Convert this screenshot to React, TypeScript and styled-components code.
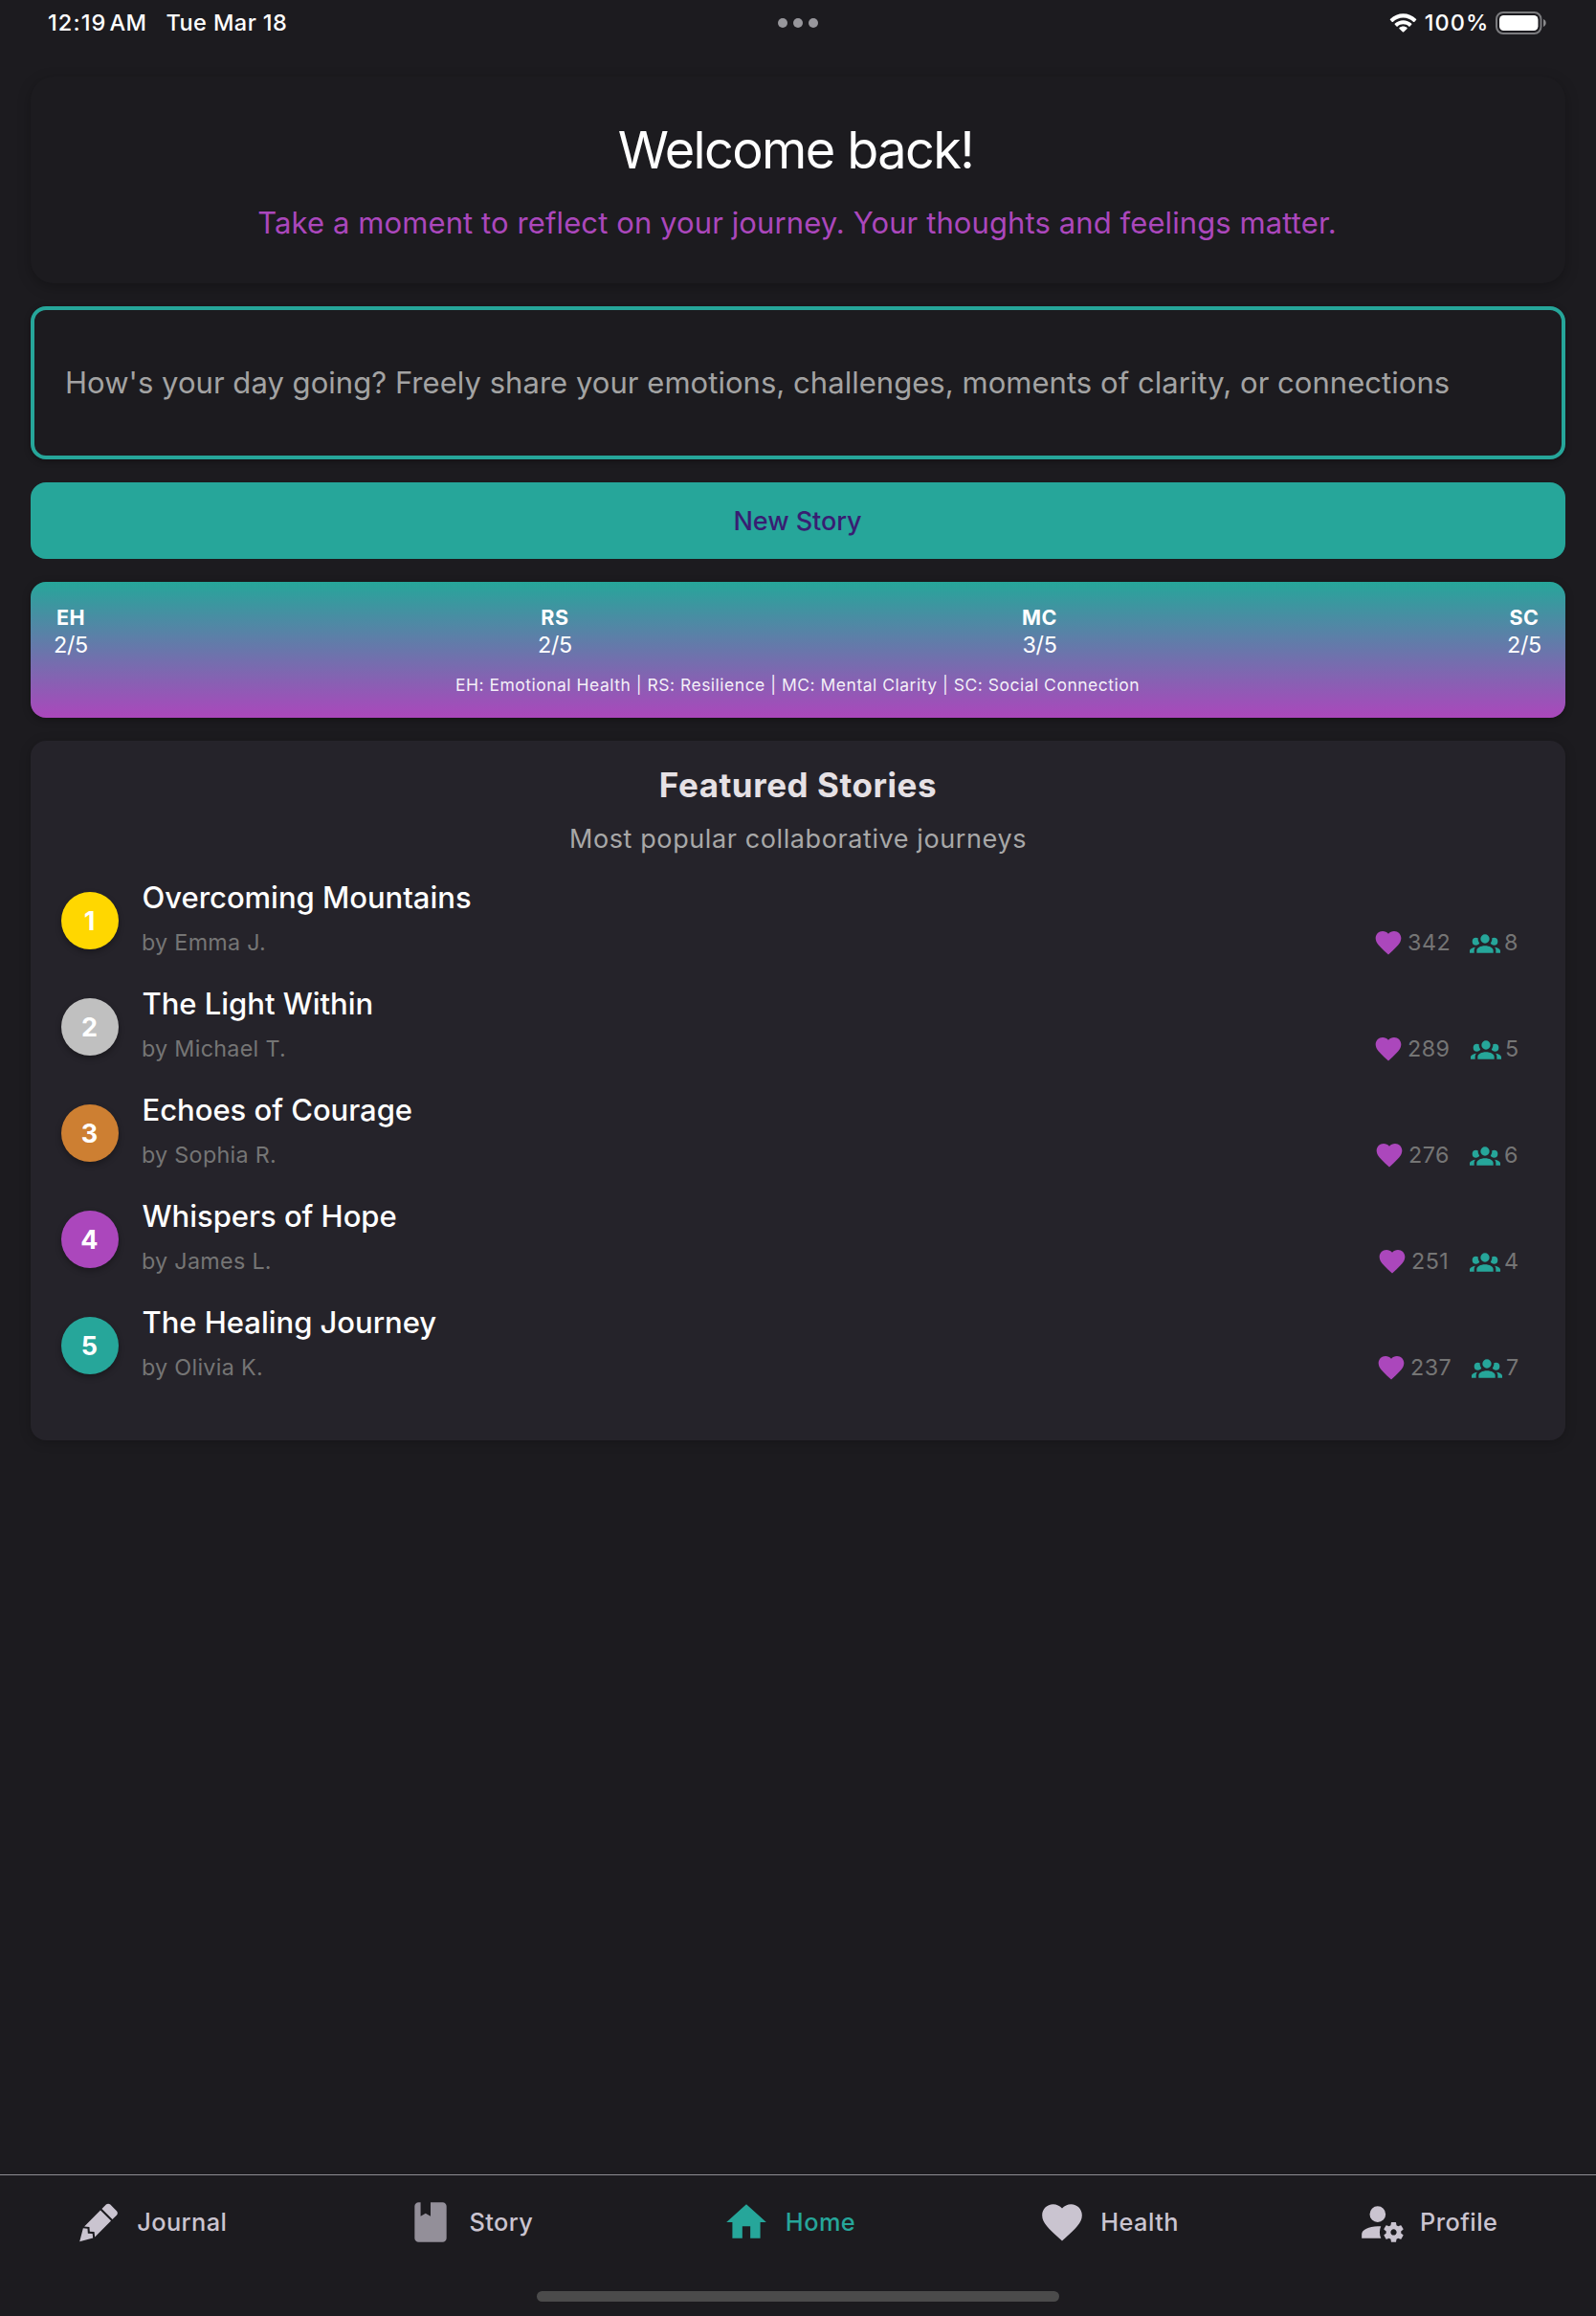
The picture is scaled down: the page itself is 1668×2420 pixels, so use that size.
import React from "react";
import styled, { createGlobalStyle } from "styled-components";

const color = {
  bg: "#1c1b1f",
  surface: "#25232a",
  teal: "#26a69a",
  purple: "#ab47bc",
  nav: "#cac4d0",
};

const GlobalStyle = createGlobalStyle`
  * { box-sizing: border-box; }
  body {
    margin: 0;
    background: ${color.bg};
    font-family: Inter, "Noto Sans", sans-serif;
    -webkit-font-smoothing: antialiased;
  }
  h1, h2, h3, p { margin: 0; font-weight: 400; }
`;

const Screen = styled.div`
  display: flex;
  flex-direction: column;
  width: 1668px;
  height: 2420px;
  background: ${color.bg};
  color: #fff;
  overflow: hidden;
`;

/* ---------- status bar ---------- */

const StatusBar = styled.header`
  display: grid;
  grid-template-columns: 1fr auto 1fr;
  align-items: start;
  height: 48px;
  padding: 0 51px 0 50px;
  flex: none;
  font-size: 23.5px;
  font-weight: 500;
  line-height: 47px;
`;

const StatusLeft = styled.div`
  display: flex;
  white-space: pre;
`;

const Time = styled.span`
  width: 123.5px;
  letter-spacing: 1.1px;
`;

const Meridiem = styled.span`
  margin-left: 3px;
  letter-spacing: 0.4px;
`;

const DateText = styled.span`
  letter-spacing: 0.42px;
`;

const Dots = styled.div`
  display: flex;
  gap: 6px;
  padding: 19px 0 0 1px;
`;

const Dot = styled.i`
  width: 10px;
  height: 10px;
  border-radius: 50%;
  background: #98979c;
`;

const StatusRight = styled.div`
  display: flex;
  justify-content: flex-end;
`;

const WifiIcon = styled.svg`
  width: 29px;
  height: 20.5px;
  margin: 13.5px 7.5px 0 0;
`;

const BatteryLevel = styled.span`
  letter-spacing: 1.1px;
  margin-right: 6.5px;
`;

const BatteryIcon = styled.svg`
  width: 53px;
  height: 24px;
  margin: 12px 1px 0 0;
`;

/* ---------- content ---------- */

const Content = styled.main`
  display: flex;
  flex-direction: column;
  gap: 24px;
  flex: 1;
  padding: 32px 32px 0;
`;

const WelcomeCard = styled.section`
  height: 216px;
  padding-top: 40px;
  border-radius: 24px;
  background: ${color.bg};
  box-shadow: 0 4px 14px rgba(0, 0, 0, 0.26);
  text-align: center;
`;

const WelcomeTitle = styled.h1`
  padding-right: 5px;
  font-size: 54px;
  line-height: 73px;
  letter-spacing: -1.6px;
`;

const WelcomeText = styled.p`
  margin-top: 16px;
  padding-right: 2px;
  font-size: 31px;
  line-height: 47px;
  letter-spacing: 0.1px;
  color: ${color.purple};
`;

const PromptField = styled.div`
  height: 160px;
  padding: 52px 32px 0;
  border: 4px solid ${color.teal};
  border-radius: 16px;
  box-shadow: 0 2px 6px rgba(0, 0, 0, 0.35);
  font-size: 31px;
  line-height: 47px;
  letter-spacing: 0.04px;
  color: #a3a3a3;
  white-space: nowrap;
`;

const StoryButton = styled.button`
  height: 80px;
  padding: 21px 1px 20px 0;
  border: 0;
  border-radius: 16px;
  background: ${color.teal};
  font: 500 27px / 39px Inter, "Noto Sans", sans-serif;
  letter-spacing: -0.05px;
  color: #381e72;
`;

const ScoreCard = styled.section`
  height: 142px;
  padding: 24px;
  border-radius: 16px;
  background: linear-gradient(180deg, ${color.teal}, ${color.purple});
  box-shadow: 0 2px 8px rgba(0, 0, 0, 0.3);
`;

const ScoreRow = styled.div`
  display: flex;
  justify-content: space-between;
  padding-right: 1px;
`;

const Score = styled.div`
  display: flex;
  flex-direction: column;
  align-items: center;
`;

const ScoreLabel = styled.span`
  font-size: 21.5px;
  font-weight: 700;
  line-height: 26px;
  letter-spacing: 0.5px;
`;

const ScoreValue = styled.span`
  font-size: 23.3px;
  line-height: 31px;
  letter-spacing: -0.3px;
`;

const Legend = styled.p`
  margin-top: 16px;
  padding-right: 1px;
  font-size: 17.5px;
  line-height: 21px;
  letter-spacing: 0.5px;
  text-align: center;
  color: rgba(255, 255, 255, 0.92);
`;

const Featured = styled.section`
  height: 731px;
  padding-top: 24px;
  border-radius: 16px;
  background: ${color.surface};
  box-shadow: 0 2px 12px rgba(0, 0, 0, 0.22);
`;

const FeaturedTitle = styled.h2`
  font-size: 35px;
  font-weight: 700;
  line-height: 44px;
  letter-spacing: 0.55px;
  text-align: center;
  color: #e6e1e5;
`;

const FeaturedSubtitle = styled.p`
  margin: 15px 0 11px;
  font-size: 27px;
  line-height: 39px;
  letter-spacing: 0.6px;
  text-align: center;
  color: #a8a8a8;
`;

const StoryRow = styled.article`
  display: flex;
  align-items: flex-start;
  gap: 24px;
  height: 111px;
  padding: 0 48px 0 32px;
`;

const Rank = styled.div<{ $color: string }>`
  width: 60px;
  height: 60px;
  margin-top: 25px;
  padding-right: 1px;
  border-radius: 50%;
  background: ${(p) => p.$color};
  box-shadow: 0 3px 6px rgba(0, 0, 0, 0.3);
  font-size: 27px;
  font-weight: 700;
  line-height: 61px;
  text-align: center;
`;

const StoryBody = styled.div`
  flex: 1;
  padding-top: 7px;
`;

const StoryTitle = styled.h3`
  padding-left: 0.5px;
  font-size: 31px;
  font-weight: 500;
  line-height: 47px;
  letter-spacing: -0.02px;
`;

const MetaRow = styled.div`
  display: flex;
  justify-content: space-between;
  margin-top: 7px;
  font-size: 23.3px;
  line-height: 33px;
  color: #757575;
`;

const Author = styled.span`
  letter-spacing: 0.3px;
`;

const Stats = styled.div`
  display: flex;
  gap: 20px;
`;

const Stat = styled.div`
  display: flex;
  align-items: flex-end;
  gap: 4px;
`;

const Count = styled.span<{ $width: number }>`
  width: ${(p) => p.$width}px;
  letter-spacing: 0.5px;
  white-space: nowrap;
`;

const Glyph = styled.svg<{ $size: number; $color: string }>`
  width: ${(p) => p.$size}px;
  height: ${(p) => p.$size}px;
  flex: none;
  fill: ${(p) => p.$color};
`;

/* ---------- bottom navigation ---------- */

const BottomNav = styled.nav`
  flex: none;
  height: 148px;
  border-top: 1px solid #8f8e93;
`;

const Tabs = styled.div`
  display: grid;
  grid-template-columns: repeat(5, 1fr);
  height: 121px;
`;

const Tab = styled.a<{ $color: string }>`
  display: flex;
  justify-content: center;
  align-items: flex-start;
  gap: 15.5px;
  padding: 24px 18.5px 0 0;
  color: ${(p) => p.$color};
  font-size: 25.3px;
  font-weight: 500;
  line-height: 49px;
  letter-spacing: 0.45px;
`;

const HomeIndicator = styled.div`
  width: 546px;
  height: 11px;
  margin: 0 auto;
  border-radius: 6px;
  background: #4b4b4b;
`;

const paths = {
  heart:
    "M12,21.35L10.55,20.03C5.4,15.36 2,12.27 2,8.5C2,5.41 4.42,3 7.5,3C9.24,3 10.91,3.81 12,5.08C13.09,3.81 14.76,3 16.5,3C19.58,3 22,5.41 22,8.5C22,12.27 18.6,15.36 13.45,20.03L12,21.35Z",
  group:
    "M12,5.5A3.5,3.5 0 0,1 15.5,9A3.5,3.5 0 0,1 12,12.5A3.5,3.5 0 0,1 8.5,9A3.5,3.5 0 0,1 12,5.5M5,8C5.56,8 6.08,8.15 6.53,8.42C6.38,9.85 6.8,11.27 7.66,12.38C7.16,13.34 6.16,14 5,14A3,3 0 0,1 2,11A3,3 0 0,1 5,8M19,8A3,3 0 0,1 22,11A3,3 0 0,1 19,14C17.84,14 16.84,13.34 16.34,12.38C17.2,11.27 17.62,9.85 17.47,8.42C17.92,8.15 18.44,8 19,8M5.5,18.25C5.5,16.18 8.41,14.5 12,14.5C15.59,14.5 18.5,16.18 18.5,18.25V20H5.5V18.25M0,20V18.5C0,17.11 1.89,15.94 4.45,15.6C3.86,16.28 3.5,17.22 3.5,18.25V20H0M24,20H20.5V18.25C20.5,17.22 20.14,16.28 19.55,15.6C22.11,15.94 24,17.11 24,18.5V20Z",
  pencil:
    "M16.84,2.73C16.45,2.73 16.07,2.88 15.77,3.17L13.65,5.29L18.95,10.6L21.07,8.5C21.67,7.89 21.67,6.94 21.07,6.36L17.9,3.17C17.6,2.88 17.22,2.73 16.84,2.73M12.94,6L4.84,14.11L7.4,14.39L7.58,16.68L9.86,16.85L10.15,19.41L18.25,11.3M4.25,15.04L2.5,21.73L9.2,19.94L8.96,17.78L6.65,17.61L6.47,15.29",
  book:
    "M18,22A2,2 0 0,0 20,20V4C20,2.89 19.1,2 18,2H12V9L9.5,7.5L7,9V2H6A2,2 0 0,0 4,4V20A2,2 0 0,0 6,22H18Z",
  home: "M10,20V14H14V20H19V12H22L12,3L2,12H5V20H10Z",
  profile:
    "M10 4A4 4 0 0 0 6 8A4 4 0 0 0 10 12A4 4 0 0 0 14 8A4 4 0 0 0 10 4M17 12C16.87 12 16.76 12.09 16.74 12.21L16.55 13.53C16.25 13.66 15.96 13.82 15.7 14L14.46 13.5C14.35 13.5 14.22 13.5 14.15 13.63L13.15 15.36C13.09 15.47 13.11 15.6 13.21 15.68L14.27 16.5C14.25 16.67 14.24 16.83 14.24 17C14.24 17.17 14.25 17.33 14.27 17.5L13.21 18.32C13.12 18.4 13.09 18.53 13.15 18.64L14.15 20.37C14.21 20.5 14.34 20.5 14.46 20.5L15.7 20C15.96 20.18 16.24 20.35 16.55 20.47L16.74 21.79C16.76 21.91 16.86 22 17 22H19C19.11 22 19.22 21.91 19.24 21.79L19.43 20.47C19.73 20.34 20 20.18 20.27 20L21.5 20.5C21.63 20.5 21.76 20.5 21.83 20.37L22.83 18.64C22.89 18.53 22.86 18.4 22.77 18.32L21.7 17.5C21.72 17.33 21.74 17.17 21.74 17C21.74 16.83 21.73 16.67 21.7 16.5L22.76 15.68C22.85 15.6 22.88 15.47 22.82 15.36L21.82 13.63C21.76 13.5 21.63 13.5 21.5 13.5L20.27 14C20 13.82 19.73 13.65 19.42 13.53L19.23 12.21C19.22 12.09 19.11 12 19 12H17M10 14C5.58 14 2 15.79 2 18V20H11.68A7 7 0 0 1 11 17A7 7 0 0 1 11.64 14.09C11.11 14.03 10.56 14 10 14M18 15.5C18.83 15.5 19.5 16.17 19.5 17C19.5 17.84 18.83 18.5 18 18.5C17.16 18.5 16.5 17.84 16.5 17C16.5 16.17 17.17 15.5 18 15.5Z",
};

type IconName = keyof typeof paths;

function Icon({ name, size, fill }: { name: IconName; size: number; fill: string }) {
  return (
    <Glyph viewBox="0 0 24 24" $size={size} $color={fill} aria-hidden>
      <path d={paths[name]} />
    </Glyph>
  );
}

const scores = [
  ["EH", "2/5"],
  ["RS", "2/5"],
  ["MC", "3/5"],
  ["SC", "2/5"],
];

const stories = [
  { title: "Overcoming Mountains", author: "Emma J.", likes: 342, likesW: 45, people: 8, peopleW: 16, badge: "#ffd700" },
  { title: "The Light Within", author: "Michael T.", likes: 289, likesW: 46, people: 5, peopleW: 15, badge: "#c0c0c0" },
  { title: "Echoes of Courage", author: "Sophia R.", likes: 276, likesW: 44, people: 6, peopleW: 16, badge: "#cd7f32" },
  { title: "Whispers of Hope", author: "James L.", likes: 251, likesW: 41, people: 4, peopleW: 16, badge: color.purple },
  { title: "The Healing Journey", author: "Olivia K.", likes: 237, likesW: 44, people: 7, peopleW: 14, badge: color.teal },
];

const tabs: { label: string; icon: IconName; fill: string; text: string }[] = [
  { label: "Journal", icon: "pencil", fill: color.nav, text: color.nav },
  { label: "Story", icon: "book", fill: "#938f99", text: color.nav },
  { label: "Home", icon: "home", fill: color.teal, text: color.teal },
  { label: "Health", icon: "heart", fill: color.nav, text: color.nav },
  { label: "Profile", icon: "profile", fill: color.nav, text: color.nav },
];

export default function App() {
  return (
    <>
      <GlobalStyle />
      <Screen>
        <StatusBar>
          <StatusLeft>
            <Time>
              12:19<Meridiem>AM</Meridiem>
            </Time>
            <DateText>Tue Mar 18</DateText>
          </StatusLeft>
          <Dots>
            <Dot />
            <Dot />
            <Dot />
          </Dots>
          <StatusRight>
            <WifiIcon viewBox="0 0 17 12" preserveAspectRatio="none" fill="#fff">
              <path d="M8.5 2.6c2.4 0 4.6.9 6.3 2.6.1.1.3.1.5 0l1.2-1.2c.1-.1.1-.4 0-.5C12-.9 5-.9.5 3.5c-.1.1-.1.4 0 .5l1.2 1.2c.2.1.4.1.5 0C3.9 3.5 6.1 2.6 8.5 2.6z" />
              <path d="M8.5 6.6c1.3 0 2.6.5 3.5 1.4.1.1.4.1.5 0l1.2-1.2c.1-.1.1-.4 0-.5C10.8 3.5 6.2 3.5 3.3 6.3c-.1.1-.1.4 0 .5L4.5 8c.1.1.4.1.5 0 .9-.9 2.2-1.4 3.5-1.4z" />
              <path d="M10.9 9.3c.1-.1.1-.4 0-.5-1.4-1.2-3.4-1.2-4.8 0-.1.1-.1.4 0 .5l2.15 2.1c.1.1.4.1.5 0l2.15-2.1z" />
            </WifiIcon>
            <BatteryLevel>100%</BatteryLevel>
            <BatteryIcon viewBox="0 0 53 24">
              <rect x="1" y="1" width="46.5" height="22" rx="7" fill="none" stroke="#7b7b7e" strokeWidth="2" />
              <rect x="4" y="4" width="40.5" height="16" rx="4.5" fill="#fff" />
              <path d="M50 8c1.8.7 2.7 2.3 2.7 4s-.9 3.3-2.7 4z" fill="#8a8a8c" />
            </BatteryIcon>
          </StatusRight>
        </StatusBar>

        <Content>
          <WelcomeCard>
            <WelcomeTitle>Welcome back!</WelcomeTitle>
            <WelcomeText>
              Take a moment to reflect on your journey. Your thoughts and feelings matter.
            </WelcomeText>
          </WelcomeCard>

          <PromptField>
            How's your day going? Freely share your emotions, challenges, moments of clarity, or connections
          </PromptField>

          <StoryButton>New Story</StoryButton>

          <ScoreCard>
            <ScoreRow>
              {scores.map(([label, value]) => (
                <Score key={label}>
                  <ScoreLabel>{label}</ScoreLabel>
                  <ScoreValue>{value}</ScoreValue>
                </Score>
              ))}
            </ScoreRow>
            <Legend>
              EH: Emotional Health | RS: Resilience | MC: Mental Clarity | SC: Social Connection
            </Legend>
          </ScoreCard>

          <Featured>
            <FeaturedTitle>Featured Stories</FeaturedTitle>
            <FeaturedSubtitle>Most popular collaborative journeys</FeaturedSubtitle>
            {stories.map((s, i) => (
              <StoryRow key={s.title}>
                <Rank $color={s.badge}>{i + 1}</Rank>
                <StoryBody>
                  <StoryTitle>{s.title}</StoryTitle>
                  <MetaRow>
                    <Author>by {s.author}</Author>
                    <Stats>
                      <Stat>
                        <Icon name="heart" size={32} fill={color.purple} />
                        <Count $width={s.likesW}>{s.likes}</Count>
                      </Stat>
                      <Stat>
                        <Icon name="group" size={32} fill={color.teal} />
                        <Count $width={s.peopleW}>{s.people}</Count>
                      </Stat>
                    </Stats>
                  </MetaRow>
                </StoryBody>
              </StoryRow>
            ))}
          </Featured>
        </Content>

        <BottomNav>
          <Tabs>
            {tabs.map((t) => (
              <Tab key={t.label} $color={t.text}>
                <Icon name={t.icon} size={50} fill={t.fill} />
                {t.label}
              </Tab>
            ))}
          </Tabs>
          <HomeIndicator />
        </BottomNav>
      </Screen>
    </>
  );
}
